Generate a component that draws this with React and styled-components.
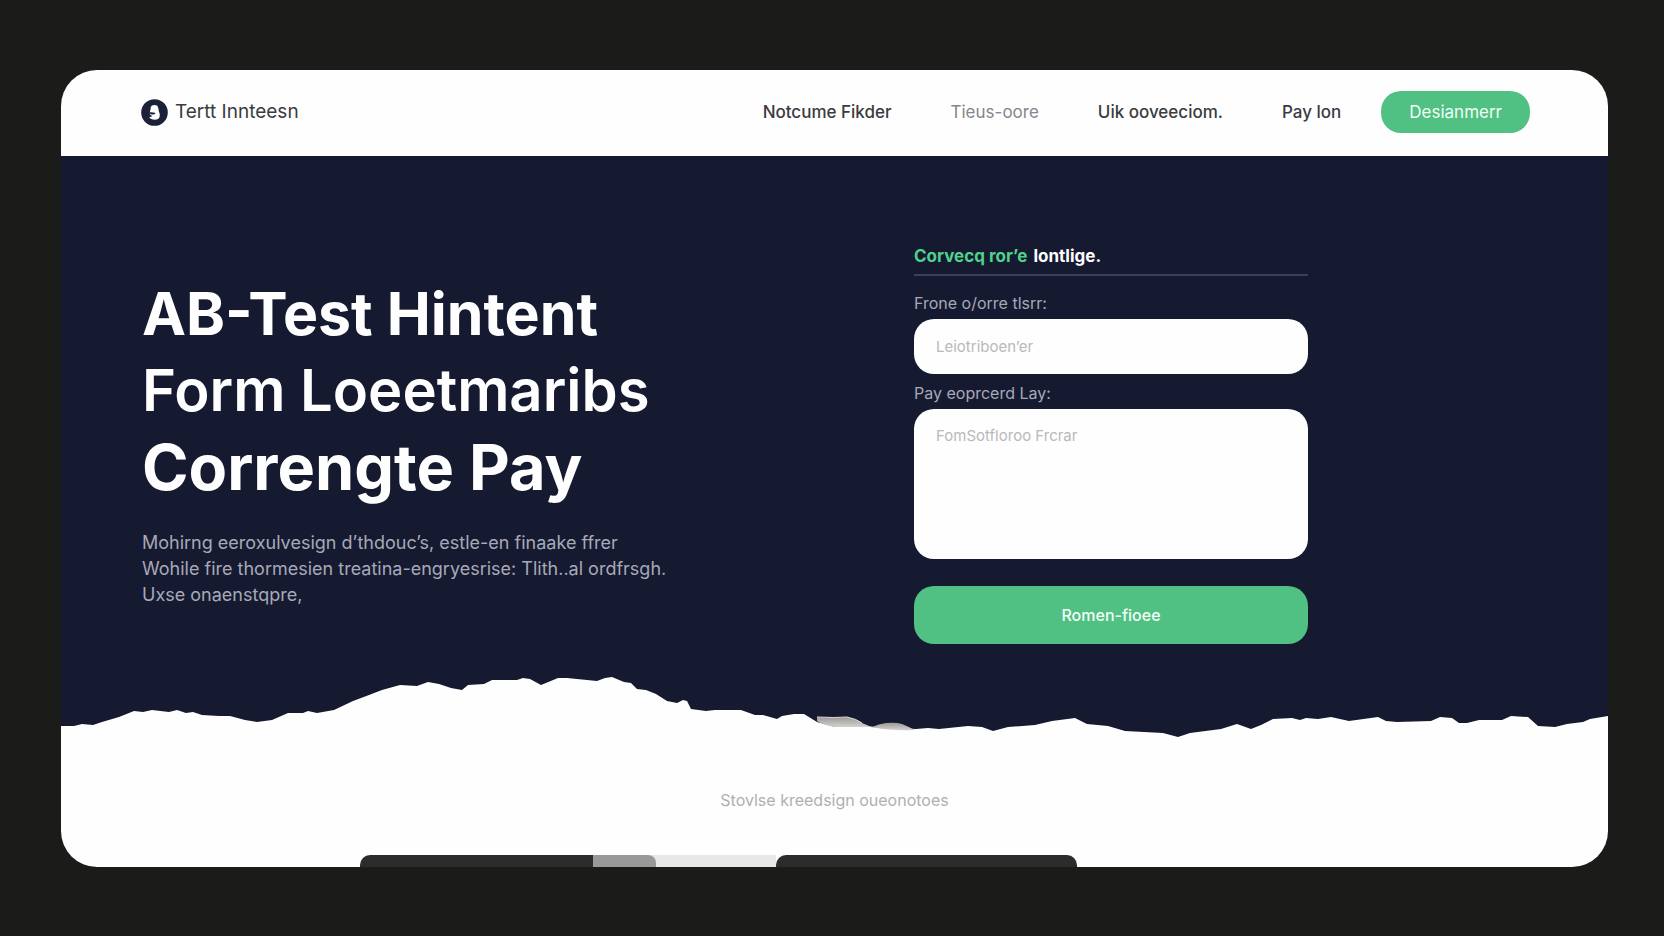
import React from 'react';
import styled, { createGlobalStyle, ThemeProvider } from 'styled-components';

const theme = {
  page: '#1b1b1a',
  white: '#fefefe',
  navy: '#161a30',
  green: '#50c083',
  brightGreen: '#4fd28c',
  ink: '#3a3b40',
  grey: '#85868a',
  softText: '#a7a9b8',
  placeholder: '#b9b9b9',
};

const GlobalStyle = createGlobalStyle`
  * {
    box-sizing: border-box;
  }

  body {
    margin: 0;
    background: ${theme.page};
    font-family: Inter, 'Liberation Sans', sans-serif;
  }

  h1, h2, p {
    margin: 0;
  }

  button, input, textarea {
    font-family: inherit;
  }
`;

const Page = styled.div`
  padding: 70px 56px 69px 61px;
`;

const Card = styled.div`
  overflow: hidden;
  border-radius: 36px;
  background: ${props => props.theme.white};
`;

/** Header */
const Header = styled.header`
  display: flex;
  align-items: center;
  justify-content: space-between;
  padding: 21px 78px 23px 80px;
`;

const Logo = styled.a`
  display: flex;
  align-items: center;
  gap: 7px;
  color: ${props => props.theme.ink};
  font-size: 19px;
  line-height: 26px;
  text-decoration: none;
`;

const Nav = styled.nav`
  display: flex;
  align-items: center;
  gap: 59px;
`;

const NavLink = styled.a`
  color: ${props => (props.$muted ? props.theme.grey : props.theme.ink)};
  font-size: 17px;
  font-weight: ${props => (props.$muted ? 400 : 500)};
  line-height: 24px;
  text-decoration: none;
`;

const NavGroup = styled.div`
  display: flex;
  align-items: center;
  gap: 40px;
`;

const Button = styled.button`
  border: 0;
  border-radius: 20px;
  background: ${props => props.theme.green};
  color: #f2fff7;
  cursor: pointer;
`;

const HeaderButton = styled(Button)`
  padding: 9px 28px;
  font-size: 17px;
  line-height: 24px;
`;

const SubmitButton = styled(Button)`
  width: 100%;
  margin-top: 27px;
  padding: 17px 28px;
  font-size: 16px;
  font-weight: 500;
  line-height: 24px;
`;

/** Hero */
const Hero = styled.section`
  background: ${props => props.theme.navy};
`;

const HeroContent = styled.div`
  display: grid;
  grid-template-columns: 772fr 613fr;
  padding: 87px 81px 26px;
`;

const Intro = styled.div`
  padding-top: 32px;
`;

const Title = styled.h1`
  color: ${props => props.theme.white};
  line-height: 77px;
`;

const titleSizes = {
  small: '58px',
  medium: '59px',
  large: '63px',
};

const TitleLine = styled.span`
  display: block;
  height: 77px;
  font-size: ${props => titleSizes[props.$size]};
  font-weight: ${props => (props.$size === 'small' ? 600 : 700)};
`;

const Lead = styled.p`
  margin-top: 24px;
  color: ${props => props.theme.softText};
  font-size: 18px;
  line-height: 26px;
`;

const LeadLine = styled.span`
  display: block;
`;

/** Form */
const Form = styled.form`
  max-width: 394px;
`;

const FormTitle = styled.h2`
  padding-bottom: 5px;
  border-bottom: 2px solid #3c4057;
  color: ${props => props.theme.white};
  font-size: 17px;
  font-weight: 700;
  line-height: 26px;
`;

const Accent = styled.span`
  margin-right: 2px;
  color: ${props => props.theme.brightGreen};
`;

const Label = styled.label`
  display: block;
  padding: ${props => props.$top} 0 5px;
  color: ${props => props.theme.softText};
  font-size: 16px;
  line-height: 22px;
`;

const Input = styled.input`
  display: block;
  width: 100%;
  height: 55px;
  padding: 0 22px;
  border: 0;
  border-radius: 20px;
  background: ${props => props.theme.white};
  font-size: 15px;

  &::placeholder {
    color: ${props => props.theme.placeholder};
    opacity: 1;
  }
`;

const TextArea = styled(Input)`
  height: 150px;
  padding: 16px 22px;
  line-height: 22px;
  resize: none;
`;

const TornEdge = styled.svg`
  display: block;
  width: 100%;
  height: 70px;
`;

/** Footer */
const Footer = styled.footer`
  padding-top: 48px;
`;

const Caption = styled.p`
  color: #b0b0b0;
  font-size: 16px;
  line-height: 24px;
  text-align: center;
`;

const Tiles = styled.div`
  display: grid;
  grid-template-columns: 299fr 233fr 63fr 120fr 301fr 531fr;
  height: 12px;
  margin-top: 43px;
`;

const Tile = styled.div`
  grid-column: ${props => props.$column};
  grid-row: 1;
  border-radius: ${props => props.$radius || '0'};
  background: ${props => props.$color};
`;

const LogoMark = () => (
  <svg width="27" height="27" viewBox="0 0 27 27" aria-hidden="true">
    <circle cx="13.5" cy="13.5" r="13.3" fill="#1c2038" />
    <path
      d="M9.6 9.200c0-2 1.700-3.200 3.900-3.200 2.300 0 3.600 1.200 3.900 3.400.2 1.600.3 2.600.9 4.100.5 1.300.7 2.600.4 4-.5 2.200-2.300 3.200-5 3.200-2.600 0-4.500-.7-5.600-2.700 1.300.1 2.500-.2 3.300-.9-1.700-.6-2.600-1.600-2.600-3.100 0-1.900.800-2.800.8-4.800z"
      fill="#fefefe"
    />
    <path d="M8.300 13.300c2.300-.2 4.100-.1 6.300.7-.7 1.300-2.100 1.700-3.600 1.600-1.500-.1-2.600-1-2.700-2.300z" fill="#1c2038" />
  </svg>
);

const tornLine =
  '0,56 13,56 21,54 32,55 41,52 58,47 73,41 82,42 91,40 108,42 116,40 125,43 132,42 141,45 158,46 169,46 184,50 196,52 211,50 227,43 242,43 247,41 256,43 273,40 292,31 308,25 321,20 339,15 356,16 367,12 378,14 390,18 401,20 407,15 423,14 431,10 456,10 462,8 469,9 480,15 497,8 506,8 516,9 536,11 544,8 551,7 563,12 570,13 576,19 585,20 595,24 606,31 616,33 622,30 626,31 630,39 645,41 654,40 680,40 694,45 702,45 716,49 721,46 733,44 743,44 756,52 774,57 809,57 855,59 867,58 878,59 907,56 921,57 932,61 947,57 974,55 991,51 1014,48 1026,54 1047,56 1064,61 1102,63 1117,67 1129,63 1160,59 1176,54 1190,59 1200,55 1212,49 1231,48 1239,50 1245,48 1257,49 1270,47 1288,51 1317,47 1325,51 1336,52 1370,51 1379,47 1391,48 1398,53 1406,53 1418,50 1441,50 1450,46 1467,47 1477,56 1494,57 1506,54 1522,52 1529,49 1547,46';

const Torn = () => (
  <TornEdge viewBox="0 0 1547 70" preserveAspectRatio="none" aria-hidden="true">
    <defs>
      <linearGradient id="fold" x1="0" y1="0" x2="0" y2="1">
        <stop offset="0" stopColor="#9a9997" />
        <stop offset="1" stopColor="#d3d2ce" />
      </linearGradient>
    </defs>
    <polygon points={`${tornLine} 1547,71 0,71`} fill={theme.white} />
    <path d="M756 47q18 1 30 0 10 2 15 6 6 3 12 4l-39 0q-12-2-18-6z" fill="url(#fold)" />
    <path d="M811 57q7-3 14-4 10-1 16 1 7 3 13 6-24 1-43-3z" fill="url(#fold)" />
    <path d="M756 47q18 1 30 0 10 2 15 6" fill="none" stroke="#dcdbd8" />
  </TornEdge>
);

const App = () => (
  <ThemeProvider theme={theme}>
    <GlobalStyle />
    <Page>
      <Card>
        <Header>
          <Logo href="#home">
            <LogoMark />
            Tertt Innteesn
          </Logo>
          <NavGroup>
            <Nav>
              <NavLink href="#finder">Notcume Fikder</NavLink>
              <NavLink href="#tests" $muted>
                Tieus-oore
              </NavLink>
              <NavLink href="#conversion">Uik ooveeciom.</NavLink>
              <NavLink href="#pay">Pay lon</NavLink>
            </Nav>
            <HeaderButton type="button">Desianmerr</HeaderButton>
          </NavGroup>
        </Header>

        <Hero>
          <HeroContent>
            <Intro>
              <Title>
                <TitleLine $size="medium">AB-Test Hintent</TitleLine>
                <TitleLine $size="small">Form Loeetmaribs</TitleLine>
                <TitleLine $size="large">Correngte Pay</TitleLine>
              </Title>
              <Lead>
                <LeadLine>Mohirng eeroxulvesign d’thdouc’s, estle-en finaake ffrer</LeadLine>
                <LeadLine>Wohile fire thormesien treatina-engryesrise: Tlith..al ordfrsgh.</LeadLine>
                <LeadLine>Uxse onaenstqpre,</LeadLine>
              </Lead>
            </Intro>

            <Form onSubmit={e => e.preventDefault()}>
              <FormTitle>
                <Accent>Corvecq ror’e</Accent> lontlige.
              </FormTitle>
              <Label htmlFor="name" $top="16px">
                Frone o/orre tlsrr:
              </Label>
              <Input id="name" type="text" placeholder="Leiotriboen’er" />
              <Label htmlFor="message" $top="8px">
                Pay eoprcerd Lay:
              </Label>
              <TextArea as="textarea" id="message" placeholder="FomSotfloroo Frcrar" />
              <SubmitButton type="submit">Romen-fioee</SubmitButton>
            </Form>
          </HeroContent>
          <Torn />
        </Hero>

        <Footer>
          <Caption>Stovlse kreedsign oueonotoes</Caption>
          <Tiles>
            <Tile $column="3 / 5" $color="#e8e8e6" />
            <Tile $column="3" $color="#999997" $radius="0 8px 0 0" />
            <Tile $column="2" $color="#2c2d2b" $radius="10px 0 0 0" />
            <Tile $column="5" $color="#2c2d2b" $radius="10px 10px 0 0" />
          </Tiles>
        </Footer>
      </Card>
    </Page>
  </ThemeProvider>
);

export default App;
